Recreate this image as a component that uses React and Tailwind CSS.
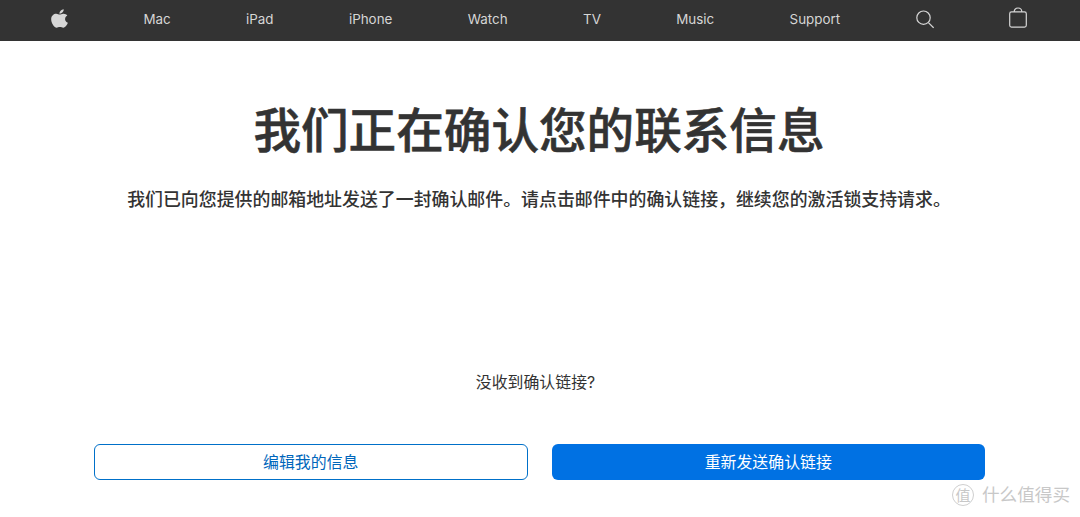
import { FaApple } from 'react-icons/fa';

const navLinks = ['Mac', 'iPad', 'iPhone', 'Watch', 'TV', 'Music', 'Support'];

const SearchIcon = () => (
  <svg className="w-[18px] h-[19px]" viewBox="0 0 18 19" fill="none" stroke="currentColor" strokeWidth="1.2">
    <circle cx="7.5" cy="7.7" r="6.7" />
    <path d="M12.4 12.6 L17.6 17.8" />
  </svg>
);

const BagIcon = () => (
  <svg className="w-[18px] h-[21px]" viewBox="0 0 18 21" fill="none" stroke="currentColor" strokeWidth="1.2">
    <rect x="0.7" y="4.9" width="16.6" height="15.2" rx="1.8" />
    <path d="M5.2 4.9 C5.2 2.4 6.8 1 9 1 C11.2 1 12.8 2.4 12.8 4.9" />
  </svg>
);

const NavBar = () => (
  <nav className="h-[41px] bg-[#333333] text-[#d6d6d6] pl-[51px] pr-[53px] pb-[2px] flex items-center justify-between font-['Inter','Liberation_Sans',sans-serif] text-[13.4px]">
    <a href="#" aria-label="Apple" className="pb-[3px]">
      <FaApple className="w-[17px] h-[21px]" preserveAspectRatio="none" />
    </a>
    {navLinks.map((link) => (
      <a key={link} href="#">
        {link}
      </a>
    ))}
    <a href="#" aria-label="Search" className="pb-[1px]">
      <SearchIcon />
    </a>
    <a href="#" aria-label="Bag" className="pb-[4px]">
      <BagIcon />
    </a>
  </nav>
);

const Watermark = () => (
  <div className="absolute left-[952px] top-[484px] flex items-center gap-[8px] text-[#c8c8c8] leading-none">
    <span className="w-[22px] h-[22px] rounded-full border border-[#cfcfcf] flex items-center justify-center text-[15px]">
      值
    </span>
    <span className="text-[17.6px]">什么值得买</span>
  </div>
);

const App = () => {
  return (
    <div className="relative h-[517px] overflow-hidden bg-white text-[#333333] font-['Inter','Noto_Sans_CJK_SC',sans-serif]">
      <NavBar />
      <main className="flex flex-col items-center text-center whitespace-nowrap">
        <h1 className="mt-[60px] pr-[2px] text-[47.6px] leading-[60px] font-medium [-webkit-text-stroke:0.6px_#333333]">
          我们正在确认您的联系信息
        </h1>
        <p className="mt-[25px] pr-[2px] text-[17.92px] leading-[28px] font-medium">
          我们已向您提供的邮箱地址发送了一封确认邮件。请点击邮件中的确认链接，继续您的激活锁支持请求。
        </p>
        <p className="mt-[157px] pr-[9px] text-[15.9px] leading-[24px]">没收到确认链接?</p>
        {/* Actions */}
        <div className="mt-[49px] w-full pl-[94px] pr-[95px] grid grid-cols-2 gap-[24px] text-[15.9px]">
          <button className="h-[36px] pt-px rounded-[6px] border border-[#0070c9] text-[#0066bb]">
            编辑我的信息
          </button>
          <button className="h-[36px] pt-px rounded-[6px] bg-[#0071e3] text-white">
            重新发送确认链接
          </button>
        </div>
      </main>
      <Watermark />
    </div>
  );
};

export default App;
